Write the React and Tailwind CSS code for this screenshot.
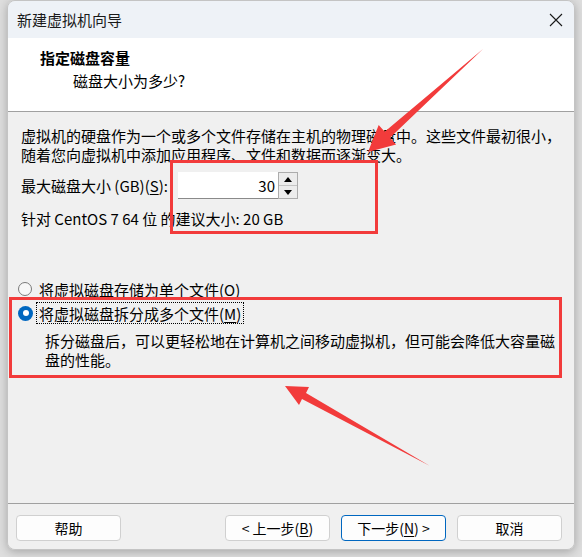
import React from 'react';

const Key = ({ children }) => <span className="underline underline-offset-2">{children}</span>;

const Btn = ({ children, primary }) => (
    <button
        className={
            primary
                ? 'w-[105px] h-[26px] rounded-[4px] border border-[#0067c0] bg-[#fdfdfd] text-[14px] leading-none text-black'
                : 'w-[105px] h-[26px] rounded-[4px] border border-[#d0d0d0] bg-[#fdfdfd] text-[14px] leading-none text-black'
        }
    >
        {children}
    </button>
);

const App = () => {
    return (
        <div
            className="relative w-[582px] h-[557px] overflow-hidden bg-[#dedede]"
            style={{ fontFamily: '"Noto Sans CJK SC", "Noto Sans", sans-serif' }}
        >
            <div className="ml-[7px] w-[568px] h-[550px] flex flex-col rounded-lg overflow-hidden border border-[#c4c4c4] shadow-[0_2px_10px_rgba(0,0,0,0.25)] text-black">
                {/* title bar */}
                <div className="h-[37px] shrink-0 bg-[#eef2f7] flex items-center justify-between pl-[9px] pr-[11px]">
                    <span className="text-[15px] leading-none text-[#1a1a1a]">新建虚拟机向导</span>
                    <svg width="14" height="14" viewBox="0 0 14 14">
                        <path d="M1 1 L13 13 M13 1 L1 13" stroke="#1a1a1a" strokeWidth="1.1" fill="none" />
                    </svg>
                </div>

                {/* header */}
                <div className="h-[74px] shrink-0 bg-white border-b border-[#a0a0a0] pt-[10px] pl-[32px]">
                    <div className="text-[15px] leading-[20px] font-bold">指定磁盘容量</div>
                    <div className="mt-[3px] pl-[33px] text-[15px] leading-[20px]">磁盘大小为多少?</div>
                </div>

                {/* body */}
                <div className="h-[391px] shrink-0 bg-[#f0f0f0] pl-[13px] pt-[14px] text-[15px]">
                    <p className="leading-[19px] whitespace-nowrap">
                        虚拟机的硬盘作为一个或多个文件存储在主机的物理磁盘中。这些文件最初很小，
                        <br />
                        随着您向虚拟机中添加应用程序、文件和数据而逐渐变大。
                    </p>

                    <div className="mt-[8px] h-[27px] flex items-center">
                        <span className="w-[157px] leading-none whitespace-nowrap">
                            最大磁盘大小 (GB)(<Key>S</Key>):
                        </span>
                        <div className="w-[100px] h-[27px] bg-white border-b border-[#8a8a8a] flex items-center justify-end pr-[3px] leading-none">
                            30
                        </div>
                        <div className="w-[20px] h-[27px] border border-[#acacac] flex flex-col">
                            <div className="flex-1 bg-[#ececec] border-b border-[#c4c4c4] flex items-center justify-center">
                                <svg width="8" height="5" viewBox="0 0 8 5"><path d="M4 0 L8 5 L0 5 Z" fill="#000" /></svg>
                            </div>
                            <div className="flex-1 bg-[#ececec] flex items-center justify-center">
                                <svg width="8" height="5" viewBox="0 0 8 5"><path d="M0 0 L8 0 L4 5 Z" fill="#000" /></svg>
                            </div>
                        </div>
                    </div>

                    <div className="mt-[10px] leading-[19px] whitespace-nowrap">
                        针对 CentOS 7 64 位 的建议大小: 20 GB
                    </div>

                    <div className="mt-[51px] ml-[-3px] h-[20px] flex items-center">
                        <span className="w-[14px] h-[14px] rounded-full border border-[#7a7a7a] bg-[#f7f7f7]" />
                        <span className="ml-[7px] leading-none">
                            将虚拟磁盘存储为单个文件(<Key>O</Key>)
                        </span>
                    </div>

                    <div className="mt-[3px] ml-[-3px] h-[22px] flex items-center">
                        <span className="w-[15px] h-[15px] rounded-full bg-[#0067c0] flex items-center justify-center">
                            <span className="w-[6px] h-[6px] rounded-full bg-white" />
                        </span>
                        <span className="ml-[3px] h-[22px] pl-[2px] pr-[2px] border border-dotted border-black flex items-center leading-none">
                            将虚拟磁盘拆分成多个文件(<Key>M</Key>)
                        </span>
                    </div>

                    <p className="mt-[7px] pl-[24px] leading-[19px] whitespace-nowrap">
                        拆分磁盘后，可以更轻松地在计算机之间移动虚拟机，但可能会降低大容量磁
                        <br />
                        盘的性能。
                    </p>
                </div>

                {/* footer */}
                <div className="flex-1 bg-[#f0f0f0] border-t border-[#a0a0a0] pt-[11px] pl-[8px] pr-[12px] flex items-start">
                    <Btn>帮助</Btn>
                    <div className="ml-auto flex gap-[11px]">
                        <Btn>&lt; 上一步(<Key>B</Key>)</Btn>
                        <Btn primary>下一步(<Key>N</Key>) &gt;</Btn>
                        <Btn>取消</Btn>
                    </div>
                </div>
            </div>

            {/* red annotations */}
            <svg className="absolute inset-0 pointer-events-none" width="582" height="557" viewBox="0 0 582 557">
                <rect x="171.5" y="161.5" width="205" height="71" fill="none" stroke="#f23b3b" strokeWidth="3" />
                <rect x="10.5" y="298.5" width="550" height="78" fill="none" stroke="#f23b3b" strokeWidth="3" />
                <polygon
                    points="368,152 378.7,125 384.7,131.7 483,49 390,137.7 396.1,144.4"
                    fill="#f23b3b"
                />
                <polygon
                    points="285,386 309,387 306,393 430,466 302,399 299,405"
                    fill="#f23b3b"
                />
            </svg>
        </div>
    );
};

export default App;
